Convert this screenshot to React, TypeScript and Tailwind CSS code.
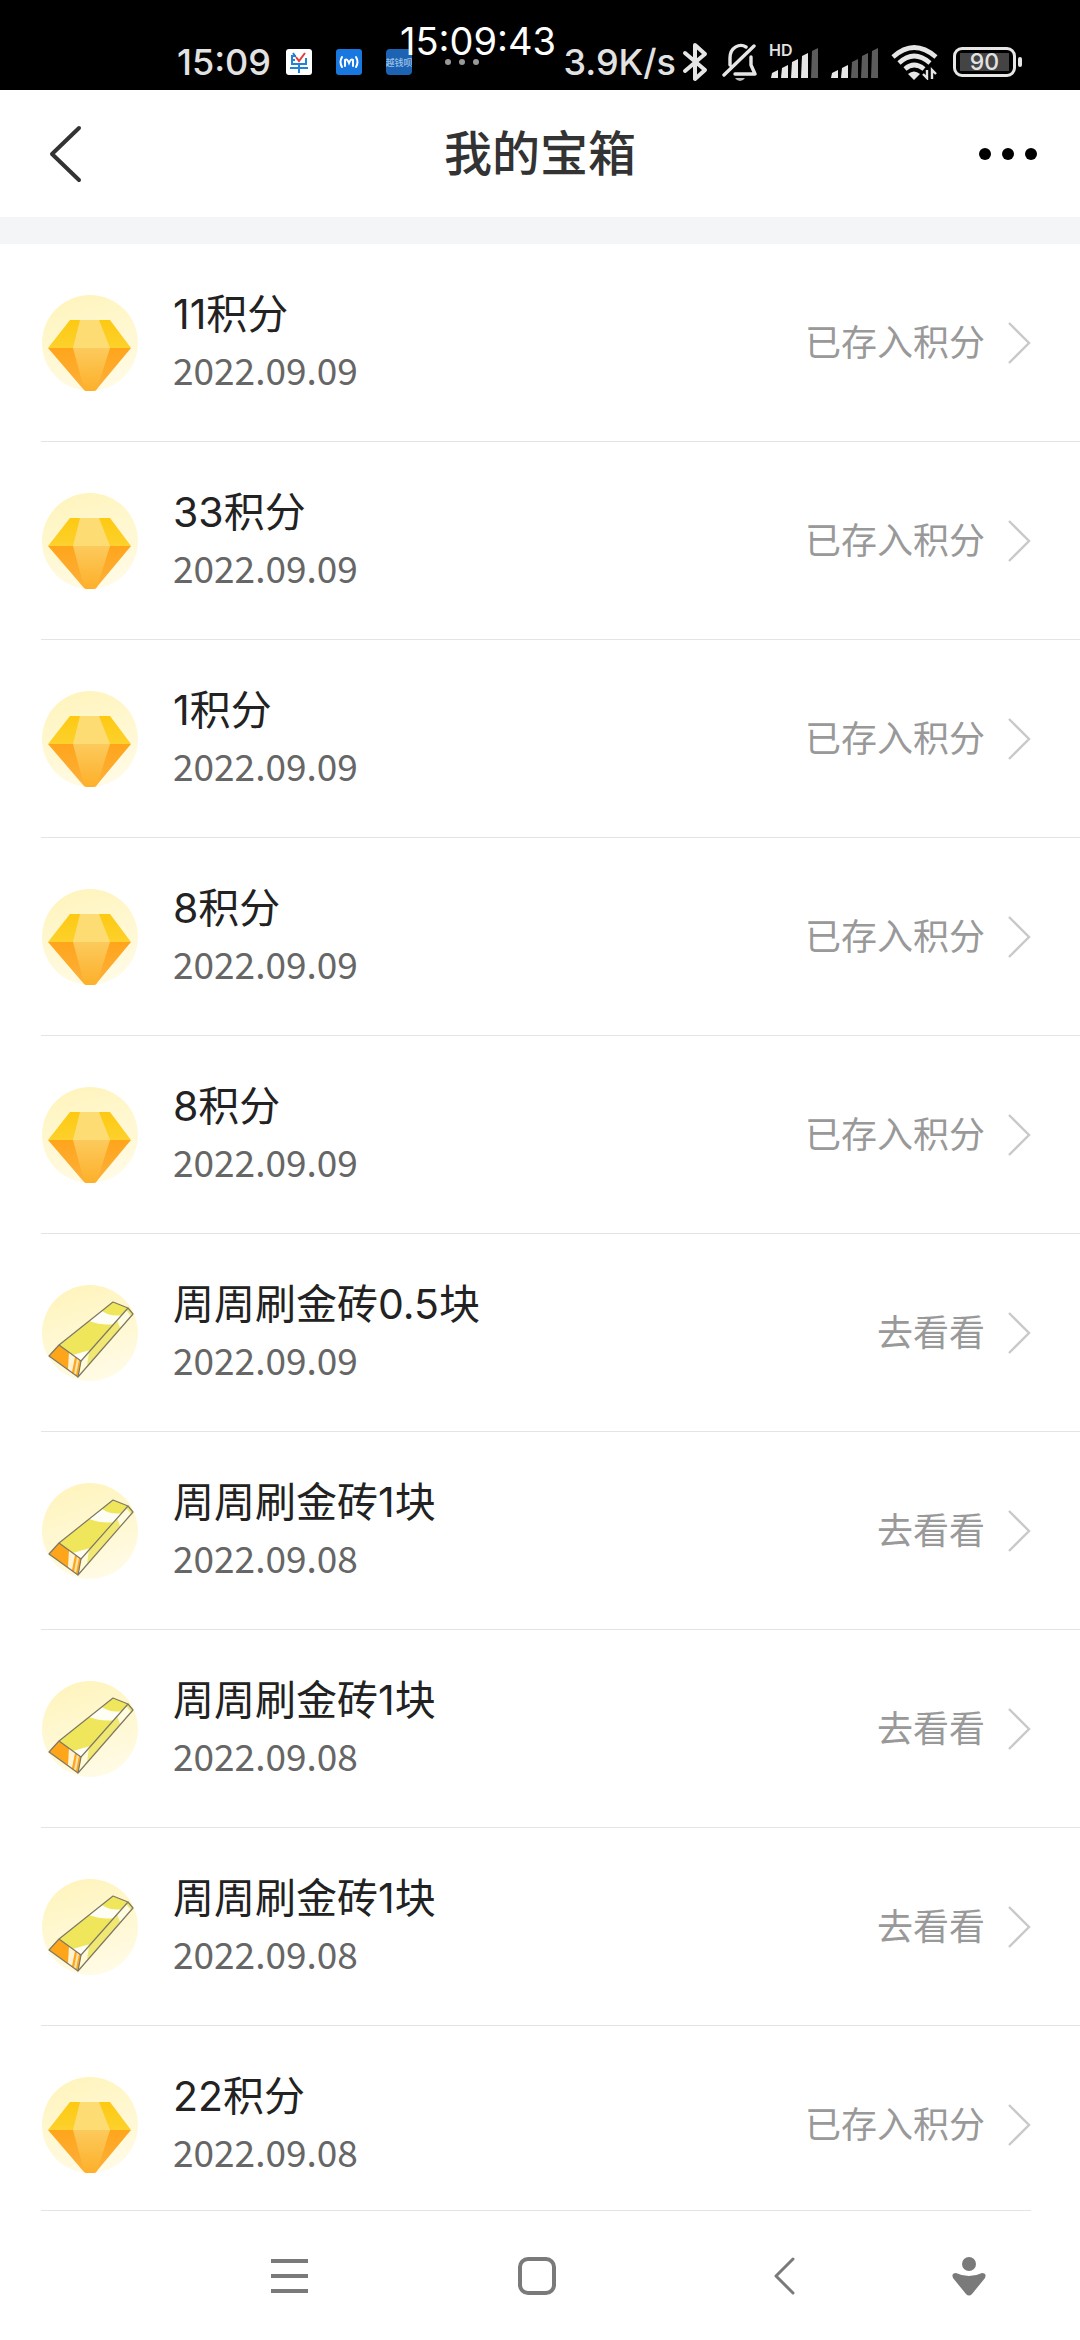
import React from 'react';

type Kind = 'gem' | 'brick';

interface Reward {
  title: string;
  date: string;
  kind: Kind;
}

const rewards: Reward[] = [
  { title: '11积分', date: '2022.09.09', kind: 'gem' },
  { title: '33积分', date: '2022.09.09', kind: 'gem' },
  { title: '1积分', date: '2022.09.09', kind: 'gem' },
  { title: '8积分', date: '2022.09.09', kind: 'gem' },
  { title: '8积分', date: '2022.09.09', kind: 'gem' },
  { title: '周周刷金砖0.5块', date: '2022.09.09', kind: 'brick' },
  { title: '周周刷金砖1块', date: '2022.09.08', kind: 'brick' },
  { title: '周周刷金砖1块', date: '2022.09.08', kind: 'brick' },
  { title: '周周刷金砖1块', date: '2022.09.08', kind: 'brick' },
  { title: '22积分', date: '2022.09.08', kind: 'gem' },
];

// Shared gradients, referenced by id from every row icon
const IconDefs = () => (
  <svg className="absolute h-0 w-0" aria-hidden="true">
    <defs>
      <linearGradient id="disc" x1="0.3" y1="0" x2="0.6" y2="1">
        <stop offset="0" stopColor="#fff4bd" />
        <stop offset="1" stopColor="#fffbe6" />
      </linearGradient>
      <linearGradient id="gemTop" x1="0" y1="0" x2="0" y2="1">
        <stop offset="0" stopColor="#fdc912" />
        <stop offset="1" stopColor="#fdd12c" />
      </linearGradient>
      <linearGradient id="gemBottom" x1="0" y1="0" x2="0" y2="1">
        <stop offset="0" stopColor="#ffa51c" />
        <stop offset="1" stopColor="#fcb03a" />
      </linearGradient>
      <linearGradient id="gemCenter" x1="0" y1="0" x2="0" y2="1">
        <stop offset="0" stopColor="#fcca5c" />
        <stop offset="1" stopColor="#fdb02a" />
      </linearGradient>
    </defs>
  </svg>
);

const GemIcon = () => (
  <svg viewBox="0 0 98 98" className="size-[98px] shrink-0" aria-hidden="true">
    <circle cx="49" cy="49" r="48" fill="url(#disc)" />
    <path d="M29 26H69L90 54H7Z" fill="url(#gemTop)" />
    <path d="M7 54H90L55 96Q54 97 52 97H46Q44 97 43 96Z" fill="url(#gemBottom)" />
    <path d="M39 26H58L69 54H32Z" fill="#fddc74" />
    <path d="M32 54H69L56 95Q55 97 52 97H46Q44 97 43 95Z" fill="url(#gemCenter)" />
  </svg>
);

const BrickIcon = () => (
  <svg viewBox="0 0 98 98" className="size-[98px] shrink-0" aria-hidden="true">
    <circle cx="49" cy="49" r="48" fill="url(#disc)" />
    <path d="M72 18L87 24L40 77L18 61Z" fill="#f0e65c" />
    <path d="M51 35L61 27Q70 33 81 31L73 40Q62 42 48 37Z" fill="#fffef4" />
    <path d="M32 71Q41 68 50 66L40 77Z" fill="#fffef4" />
    <path d="M87 24L92 30L37 93L40 77Z" fill="#f0e872" />
    <path d="M85 26L90 32L79 44L76 36Z" fill="#fffce0" />
    <path d="M40 77L48 68L46 82L38 91Z" fill="#fffbd8" />
    <path d="M18 61L40 77L37 93L8 72Z" fill="#ffa51a" />
    <path d="M28 68L34 73L31 88L27 85Z" fill="#fff4d6" />
    <path d="M36 74L38 76L35 91L33 90Z" fill="#ffe2a6" />
    <g fill="none" stroke="#7d7866" strokeWidth="1.2" strokeLinejoin="round">
      <path d="M72 18L87 24L40 77L18 61Z" />
      <path d="M87 24L92 30L37 93L40 77" />
      <path d="M18 61L8 72L37 93" />
    </g>
  </svg>
);

const RewardRow = ({ reward, last }: { reward: Reward; last: boolean }) => (
  <li>
    <button className="flex w-full pl-[41px] text-left">
      <span
        className={`flex flex-1 border-b border-[#e4e4e4] ${last ? 'mr-[49px] h-[185px]' : 'mr-0 h-[198px] pr-[49px]'}`}
      >
        <span className="flex h-[198px] flex-1 items-center">
          {reward.kind === 'gem' ? <GemIcon /> : <BrickIcon />}
          <span className="flex flex-1 flex-col pl-[34px]">
            <span className="text-[41px] leading-[53px] text-[#222]">{reward.title}</span>
            <span className="font-['Noto_Sans_CJK_SC',sans-serif] text-[37px] leading-[57px] text-[#666]">{reward.date}</span>
          </span>
          <span className="text-[36px] text-[#999]">
            {reward.kind === 'gem' ? '已存入积分' : '去看看'}
          </span>
          <svg viewBox="0 0 24 44" className="ml-[22px] h-[44px] w-[24px]" fill="none" stroke="#c9c9c9" strokeWidth="2.4" aria-hidden="true">
            <path d="M2 2L22 22L2 42" />
          </svg>
        </span>
      </span>
    </button>
  </li>
);

const SignalBars = ({ active }: { active: number }) => (
  <svg viewBox="0 0 48 32" className="h-8 w-12" aria-hidden="true">
    {[8, 13, 19, 25, 30].map((h, i) => (
      <path
        key={h}
        d={`M${i * 10 + 1} ${32 - h + 3}L${i * 10 + 7} ${32 - h}V32H${i * 10}Z`}
        fill={i < active ? '#e6e6e6' : '#5c5c5c'}
      />
    ))}
  </svg>
);

const StatusBar = () => (
  <header className="relative flex h-[90px] items-center bg-black pt-[34px] pr-[58px] pl-[177px] text-[36px] leading-none font-medium text-[#e2e2e2]">
    <span>15:09</span>
    <svg viewBox="0 0 26 26" className="ml-[15px] size-[26px]" aria-hidden="true">
      <rect width="26" height="26" rx="3" fill="#fff" />
      <path d="M7 4L9 7M10 7H6V15H20V9M6 11H9M4 19H22M13 15V24" fill="none" stroke="#2183d8" strokeWidth="2" />
      <path d="M10 8L13 12L19 4" fill="none" stroke="#e23c3c" strokeWidth="2" />
    </svg>
    <svg viewBox="0 0 26 26" className="ml-6 size-[26px]" fill="none" stroke="#fff" strokeWidth="2" strokeLinecap="round" aria-hidden="true">
      <rect width="26" height="26" rx="3" fill="#1878e0" stroke="none" />
      <path d="M6 8Q3 13 6 18M20 8Q23 13 20 18M9 17V11Q11 9 13 14Q15 9 17 11V17" />
    </svg>
    <span className="ml-6 flex size-[26px] items-center justify-center overflow-hidden rounded-sm bg-[#1c63b4] text-[9px] whitespace-nowrap text-[#9cc0e6]">
      越钱呗
    </span>
    <span className="absolute top-[21px] left-[400px] text-[38px] leading-[40px] font-normal text-white">15:09:43</span>
    <span className="ml-[33px] flex gap-2">
      <i className="size-1.5 rounded-full bg-[#999]" />
      <i className="size-1.5 rounded-full bg-[#999]" />
      <i className="size-1.5 rounded-full bg-[#999]" />
    </span>
    <span className="ml-auto">3.9K/s</span>
    <svg viewBox="0 0 26 40" className="ml-[6px] h-10 w-[26px]" fill="none" stroke="#e6e6e6" strokeWidth="4" strokeLinejoin="round" strokeLinecap="round" aria-hidden="true">
      <path d="M3 11L23 28L13 37V3L23 12L3 29" />
    </svg>
    <svg viewBox="0 0 36 38" className="ml-[14px] h-[38px] w-9" fill="none" stroke="#e6e6e6" strokeWidth="3.4" strokeLinejoin="round" strokeLinecap="round" aria-hidden="true">
      <path d="M2 32L32 3M8 22V15C8 4 18 0 24 4M29 14V22L33 31H13" />
      <path d="M13 35H23Q21 38 18 38Q15 38 13 35Z" fill="#bbb" stroke="none" />
    </svg>
    <span className="relative ml-[13px] flex">
      <span className="absolute -top-1 -left-0.5 text-[16px] leading-none font-semibold">HD</span>
      <SignalBars active={4} />
    </span>
    <span className="ml-[12px] flex">
      <SignalBars active={2} />
    </span>
    <svg viewBox="0 0 48 36" className="ml-[12px] h-9 w-12" fill="none" stroke="#e6e6e6" strokeWidth="4.6" aria-hidden="true">
      <path d="M2 13Q23 -6 45 13M8 19Q23 5 39 19M14 25Q23 17 33 25" />
      <path d="M17 30Q23 25 29 30L23 36Z" fill="#e6e6e6" stroke="none" />
      <path d="M36 26V34L32 30M41 35V26L45 30" strokeWidth="2.4" />
    </svg>
    <span className="ml-[14px] flex h-[30px] w-[63px] items-center justify-center rounded-[9px] border-3 border-[#e6e6e6] p-1">
      <span className="flex h-[18px] flex-1 items-center justify-center bg-[#444] text-[23px] leading-none">90</span>
    </span>
    <i className="ml-0.5 h-2.5 w-1 rounded-full bg-[#e6e6e6]" />
  </header>
);

const TitleBar = () => (
  <div className="flex h-[127px] items-center justify-between pr-[43px] pl-[48px]">
    <button aria-label="返回" className="flex w-[53px]">
      <svg viewBox="0 0 34 58" className="h-[58px] w-[34px]" fill="none" stroke="#333" strokeWidth="4" strokeLinecap="round" strokeLinejoin="round">
        <path d="M31 3L4 29L31 55" />
      </svg>
    </button>
    <h1 className="text-[48px] leading-[60px] font-medium text-[#333]">我的宝箱</h1>
    <button aria-label="更多" className="flex w-[58px] justify-between">
      <i className="size-3 rounded-full bg-black" />
      <i className="size-3 rounded-full bg-black" />
      <i className="size-3 rounded-full bg-black" />
    </button>
  </div>
);

const NavBar = () => (
  <nav className="flex h-[129px] items-center pl-[270px] text-[#7a7a7a]">
    <button aria-label="最近任务">
      <svg viewBox="0 0 40 40" className="size-10" stroke="currentColor" strokeWidth="4">
        <path d="M1 5H38M1 20H38M1 35H38" />
      </svg>
    </button>
    <button aria-label="主页" className="ml-[207px]">
      <svg viewBox="0 0 40 40" className="size-10" fill="none" stroke="currentColor" strokeWidth="4">
        <rect x="3" y="3" width="34" height="34" rx="8" />
      </svg>
    </button>
    <button aria-label="后退" className="ml-[216px]">
      <svg viewBox="0 0 24 40" className="h-10 w-6" fill="none" stroke="currentColor" strokeWidth="3" strokeLinecap="round" strokeLinejoin="round">
        <path d="M20 3L3 20L20 37" />
      </svg>
    </button>
    <button aria-label="快捷操作" className="ml-[154px]">
      <svg viewBox="0 0 36 40" className="h-10 w-9" fill="currentColor">
        <circle cx="18" cy="8" r="7" />
        <path d="M5 17Q11 20 18 20Q25 20 31 17Q36 17 34 22L21 38Q18 41 15 38L2 22Q0 17 5 17Z" />
      </svg>
    </button>
  </nav>
);

const App: React.FC = () => {
  return (
    <div className="flex min-h-screen flex-col bg-white font-['Inter','Noto_Sans_CJK_SC',sans-serif]">
      <IconDefs />
      <StatusBar />
      <TitleBar />
      <main className="border-t-[27px] border-[#f4f5f7]">
        <ul>
          {rewards.map((reward, i) => (
            <RewardRow key={i} reward={reward} last={i === rewards.length - 1} />
          ))}
        </ul>
      </main>
      <NavBar />
    </div>
  );
};

export default App;
